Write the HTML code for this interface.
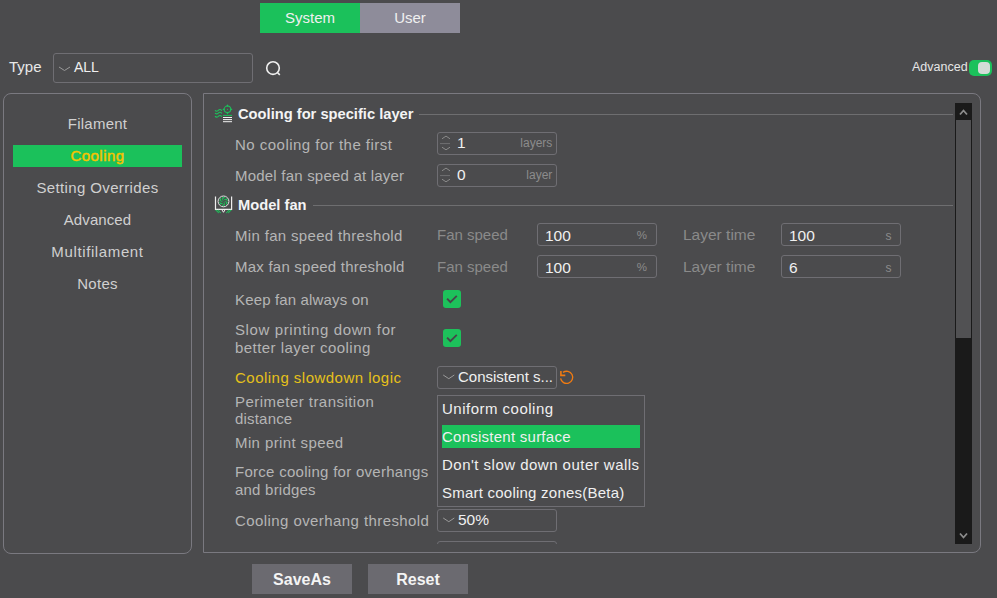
<!DOCTYPE html>
<html><head><meta charset="utf-8">
<style>
html,body{margin:0;padding:0;}
body{width:997px;height:598px;background:#4b4b4d;position:relative;overflow:hidden;font-family:"Liberation Sans",sans-serif;color:#b9b9b9;}
.a{position:absolute;white-space:nowrap;}
.t{position:absolute;white-space:nowrap;font-size:15px;letter-spacing:0.35px;line-height:20px;}
.tab{position:absolute;top:3px;height:30px;width:100px;text-align:center;line-height:30px;font-size:15px;color:#f0f0f0;}
.box{position:absolute;border:1px solid #6f6e73;border-radius:3px;box-sizing:border-box;}
.val{position:absolute;font-size:15.5px;color:#f0f0f0;line-height:20px;}
.unit{position:absolute;font-size:12px;color:#8c8c8c;line-height:16px;}
.lbl{font-size:15px;letter-spacing:0.35px;color:#b5b5b5;}
.side{position:absolute;left:13px;width:169px;text-align:center;font-size:15px;line-height:20px;color:#d0d0d0;margin-top:0px;}
.hdr{position:absolute;font-weight:bold;font-size:14.7px;color:#f4f4f4;line-height:20px;}
.hline{position:absolute;height:1px;background:#6e6e70;}
.chk{position:absolute;width:18px;height:18px;background:#1dc15b;border-radius:3px;}
.btn{position:absolute;top:564px;height:30px;width:100px;background:#6b6a70;color:#f4f4f4;font-weight:bold;font-size:16px;text-align:center;line-height:31px;}
</style></head><body>
<!-- tabs -->
<div class="tab" style="left:260px;background:#1bc15b;">System</div>
<div class="tab" style="left:360px;background:#8e8c9a;">User</div>

<!-- type row -->
<div class="t" style="left:9px;top:57px;color:#e8e8e8;font-size:15px;letter-spacing:0;">Type</div>
<div class="box" style="left:53px;top:53px;width:200px;height:30px;"></div>
<svg class="a" style="left:58px;top:65.5px" width="13" height="6" viewBox="0 0 13 6"><path d="M1 1 L6.5 4.5 L12 1" stroke="#9a9a9a" stroke-width="1" fill="none"/></svg>
<div class="t" style="left:74px;top:57px;color:#f0f0f0;font-size:14px;letter-spacing:-0.1px;">ALL</div>
<svg class="a" style="left:264px;top:59px" width="20" height="18" viewBox="0 0 20 18"><circle cx="9" cy="9.1" r="6.3" stroke="#f0f0f0" stroke-width="1.6" fill="none"/><path d="M13.6 13.7 L15.8 15.9" stroke="#f0f0f0" stroke-width="1.6"/></svg>

<!-- advanced toggle -->
<div class="t" style="left:912px;top:57px;font-size:12.5px;letter-spacing:0;color:#e6e6e6;">Advanced</div>
<div class="a" style="left:969px;top:60px;width:23px;height:16px;background:#1bc15b;border-radius:5px;"></div>
<div class="a" style="left:978px;top:62px;width:12px;height:12px;background:#d3ddd7;border-radius:4px;"></div>

<!-- left panel -->
<div class="box" style="left:3px;top:93px;width:189px;height:461px;border-radius:8px;border-color:#7a7980;"></div>
<div class="side" style="top:114px;letter-spacing:0.24px;">Filament</div>
<div class="a" style="left:13px;top:145px;width:169px;height:22px;background:#1bc15b;"></div>
<div class="side" style="top:146px;color:#f6c300;-webkit-text-stroke:0.45px #f6c300;letter-spacing:0.45px;">Cooling</div>
<div class="side" style="top:178px;letter-spacing:0.37px;">Setting Overrides</div>
<div class="side" style="top:210px;letter-spacing:0.10px;">Advanced</div>
<div class="side" style="top:242px;letter-spacing:0.62px;">Multifilament</div>
<div class="side" style="top:274px;letter-spacing:0.30px;">Notes</div>

<!-- right panel -->
<div class="a" style="left:203px;top:93px;width:778px;height:460px;border:1px solid #7a7980;border-radius:0 8px 8px 0;box-sizing:border-box;"></div>

<!-- scrollbar -->
<div class="a" style="left:955px;top:103px;width:17px;height:441px;background:#1a1a1a;"></div>
<div class="a" style="left:956px;top:120px;width:15px;height:218px;background:#515153;"></div>
<svg class="a" style="left:957px;top:107px" width="13" height="10" viewBox="0 0 13 10"><path d="M3 7.5 L6.5 3.5 L10 7.5" stroke="#8c8c8c" stroke-width="1.8" fill="none"/></svg>
<svg class="a" style="left:957px;top:531px" width="13" height="10" viewBox="0 0 13 10"><path d="M3 2.5 L6.5 6.5 L10 2.5" stroke="#8c8c8c" stroke-width="1.8" fill="none"/></svg>


<!-- section 1 header -->
<svg class="a" style="left:212px;top:102px" width="24" height="24" viewBox="0 0 24 24">
<g stroke="#1dc15b" stroke-width="1.1" fill="none" stroke-linecap="round">
<path d="M3.3 8.6 C4.3 9.6 5.2 9.4 6.3 8.4 C7.3 7.4 8.4 7.1 9.6 8.4"/>
<path d="M3.3 11.3 C4.3 12.3 5.2 12.1 6.3 11.1 C7.3 10.1 8.4 9.8 9.6 11.1"/>
<path d="M3.3 14.5 C4.3 15.5 5.2 15.3 6.3 14.3 C7.3 13.3 8.4 13 9.6 14.3"/>
<circle cx="15.45" cy="7.35" r="3.3" stroke-width="1.05"/>
<path d="M15.45 2.25 L16.40 3.65 L15.45 5.05 L14.50 3.65 Z M15.45 9.65 L16.40 11.05 L15.45 12.45 L14.50 11.05 Z M11.75 6.40 L13.15 7.35 L11.75 8.30 L10.35 7.35 Z M19.15 6.40 L20.55 7.35 L19.15 8.30 L17.75 7.35 Z" fill="#1dc15b" stroke="none"/>
<path d="M10.9 13.4 H20.1" stroke-width="1.05" stroke-linecap="butt"/>
</g>
<circle cx="15.45" cy="7.35" r="0.55" fill="#1dc15b"/>
<g stroke="#f2f2f2" stroke-width="1" fill="none">
<path d="M11 15.5 H20 M11 17.6 H20 M11 19.7 H20"/>
</g>
</svg>
<div class="hdr" style="left:238px;top:103.5px;">Cooling for specific layer</div>
<div class="hline" style="left:419px;top:114px;width:534px;"></div>

<div class="t lbl" style="left:235px;top:135.1px;letter-spacing:0.48px;">No cooling for the first</div>
<div class="box" style="left:437px;top:132px;width:120px;height:23px;"></div>
<svg class="a" style="left:435px;top:130px" width="20" height="28" viewBox="0 0 20 28"><path d="M7 8.8 L11 6.1 L15 8.8" stroke="#8a8a8a" stroke-width="1" fill="none"/><path d="M5 13.6 H15" stroke="#707072" stroke-width="1"/><path d="M7 17.2 L11 19.8 L15 17.2" stroke="#8a8a8a" stroke-width="1" fill="none"/></svg>
<div class="val" style="left:457px;top:133px;">1</div>
<div class="unit" style="right:444.7px;top:135px;">layers</div>

<div class="t lbl" style="left:235px;top:166.1px;letter-spacing:0.21px;">Model fan speed at layer</div>
<div class="box" style="left:437px;top:164px;width:120px;height:23px;"></div>
<svg class="a" style="left:435px;top:162px" width="20" height="28" viewBox="0 0 20 28"><path d="M7 8.8 L11 6.1 L15 8.8" stroke="#8a8a8a" stroke-width="1" fill="none"/><path d="M5 13.6 H15" stroke="#707072" stroke-width="1"/><path d="M7 17.2 L11 19.8 L15 17.2" stroke="#8a8a8a" stroke-width="1" fill="none"/></svg>
<div class="val" style="left:457px;top:165px;">0</div>
<div class="unit" style="right:444.7px;top:167px;">layer</div>

<!-- section 2 header -->
<svg class="a" style="left:212px;top:193px" width="24" height="24" viewBox="0 0 24 24">
<path d="M3.5 3.5 V16.3 H19.6 V3.5" stroke="#eeeeee" stroke-width="1.2" fill="none"/>
<circle cx="11.5" cy="8.4" r="5.4" stroke="#e4e4e4" stroke-width="1" fill="#4b4b4d"/><circle cx="11.5" cy="8.4" r="4.3" fill="#1dc15b"/>
<g stroke="#4b4b4d" stroke-width="1.05" fill="none"><path d="M12.37 8.63 Q14.20 9.12 13.07 12.72"/><path d="M11.73 9.27 Q12.22 11.10 8.54 11.92"/><path d="M10.86 9.04 Q9.52 10.38 6.97 7.60"/><path d="M10.63 8.17 Q8.80 7.68 9.93 4.08"/><path d="M11.27 7.53 Q10.78 5.70 14.46 4.88"/><path d="M12.14 7.76 Q13.48 6.42 16.03 9.20"/></g>
<circle cx="11.5" cy="8.4" r="0.9" fill="#4b4b4d"/>
<path d="M9.6 16.3 L11.5 19.3 L13.3 16.3" stroke="#eeeeee" stroke-width="1" fill="none"/>
<g fill="#1dc15b">
<circle cx="4.3" cy="17.4" r="0.7"/><circle cx="6.3" cy="17.4" r="0.7"/><circle cx="5.3" cy="18.5" r="0.7"/><circle cx="7.3" cy="18.5" r="0.7"/><circle cx="6.3" cy="19.6" r="0.7"/><circle cx="8.3" cy="19.6" r="0.7"/>
<circle cx="18.7" cy="17.4" r="0.7"/><circle cx="16.7" cy="17.4" r="0.7"/><circle cx="17.7" cy="18.5" r="0.7"/><circle cx="15.7" cy="18.5" r="0.7"/><circle cx="16.7" cy="19.6" r="0.7"/><circle cx="14.7" cy="19.6" r="0.7"/>
</g>
</svg>
<div class="hdr" style="left:238px;top:195px;">Model fan</div>
<div class="hline" style="left:313px;top:205px;width:640px;"></div>

<div class="t lbl" style="left:235px;top:225.8px;letter-spacing:0.33px;">Min fan speed threshold</div>
<div class="t" style="left:437px;top:225.2px;color:#8a8a8a;font-size:15px;letter-spacing:0;">Fan speed</div>
<div class="box" style="left:537px;top:223px;width:120px;height:23px;"></div>
<div class="val" style="left:545px;top:225.6px;">100</div>
<div class="unit" style="right:350px;top:226.5px;font-size:11.5px;">%</div>
<div class="t" style="left:683px;top:225.2px;color:#8a8a8a;font-size:15.5px;letter-spacing:0;">Layer time</div>
<div class="box" style="left:781px;top:223px;width:120px;height:23px;"></div>
<div class="val" style="left:789px;top:225.6px;">100</div>
<div class="unit" style="right:105.5px;top:227.5px;">s</div>

<div class="t lbl" style="left:235px;top:256.8px;letter-spacing:0.23px;">Max fan speed threshold</div>
<div class="t" style="left:437px;top:256.5px;color:#8a8a8a;font-size:15px;letter-spacing:0;">Fan speed</div>
<div class="box" style="left:537px;top:255px;width:120px;height:23px;"></div>
<div class="val" style="left:545px;top:257.6px;">100</div>
<div class="unit" style="right:350px;top:258.5px;font-size:11.5px;">%</div>
<div class="t" style="left:683px;top:256.5px;color:#8a8a8a;font-size:15.5px;letter-spacing:0;">Layer time</div>
<div class="box" style="left:781px;top:255px;width:120px;height:23px;"></div>
<div class="val" style="left:789px;top:257.6px;">6</div>
<div class="unit" style="right:105.5px;top:259.5px;">s</div>

<div class="t lbl" style="left:235px;top:290px;letter-spacing:0.15px;">Keep fan always on</div>
<div class="chk" style="left:443px;top:290px;"><svg width="18" height="18" viewBox="0 0 18 18"><path d="M4.1 8.7 L7.4 12.2 L13.8 5.9" stroke="#464649" stroke-width="1.9" fill="none"/></svg></div>

<div class="t lbl" style="left:235px;top:319.9px;letter-spacing:0.62px;">Slow printing down for</div>
<div class="t lbl" style="left:235px;top:337.5px;letter-spacing:0.45px;">better layer cooling</div>
<div class="chk" style="left:443px;top:329px;"><svg width="18" height="18" viewBox="0 0 18 18"><path d="M4.1 8.7 L7.4 12.2 L13.8 5.9" stroke="#464649" stroke-width="1.9" fill="none"/></svg></div>

<div class="t" style="left:235px;top:368.2px;color:#e6c11a;letter-spacing:0.48px;">Cooling slowdown logic</div>
<div class="box" style="left:437px;top:366px;width:120px;height:23px;"></div>
<svg class="a" style="left:442px;top:374px" width="14" height="6" viewBox="0 0 14 6"><path d="M1.2 1 L6.8 4.7 L12.3 1" stroke="#9a9a9a" stroke-width="1" fill="none"/></svg>
<div class="val" style="left:458px;top:366.5px;font-size:15px;letter-spacing:0px;">Consistent s...</div>
<svg class="a" style="left:554px;top:364px" width="26" height="28" viewBox="0 0 26 28"><path d="M6.6 14.4 A6.1 6.1 0 1 0 9 8.4" stroke="#f07b12" stroke-width="1.35" fill="none"/><path d="M6.9 7 V11.4 H11.3" stroke="#f07b12" stroke-width="1.6" fill="none"/></svg>

<div class="t lbl" style="left:235px;top:391.8px;letter-spacing:0.46px;">Perimeter transition</div>
<div class="t lbl" style="left:235px;top:408.9px;letter-spacing:0.19px;">distance</div>
<div class="t lbl" style="left:235px;top:432.8px;letter-spacing:0.39px;">Min print speed</div>
<div class="t lbl" style="left:235px;top:462.1px;letter-spacing:0.28px;">Force cooling for overhangs</div>
<div class="t lbl" style="left:235px;top:479.5px;letter-spacing:0.22px;">and bridges</div>

<div class="t lbl" style="left:235px;top:511.3px;letter-spacing:0.42px;">Cooling overhang threshold</div>
<div class="box" style="left:437px;top:509px;width:120px;height:23px;"></div>
<svg class="a" style="left:442px;top:517px" width="14" height="6" viewBox="0 0 14 6"><path d="M1.2 1 L6.8 4.7 L12.3 1" stroke="#9a9a9a" stroke-width="1" fill="none"/></svg>
<div class="val" style="left:458px;top:510px;">50%</div>
<div class="a" style="left:437px;top:541px;width:120px;height:3px;overflow:hidden;"><div class="box" style="left:0;top:0;width:120px;height:23px;"></div></div>

<!-- dropdown -->
<div class="a" style="left:437px;top:395px;width:208px;height:112px;background:#4b4b4d;border:1px solid #6f6e73;box-sizing:border-box;"></div>
<div class="a" style="left:442px;top:425px;width:198px;height:23px;background:#1bc15b;"></div>
<div class="t" style="left:442px;top:399px;color:#f0f0f0;letter-spacing:0.49px;">Uniform cooling</div>
<div class="t" style="left:442px;top:426.6px;color:#f0f0f0;letter-spacing:0.25px;">Consistent surface</div>
<div class="t" style="left:442px;top:454.7px;color:#f0f0f0;letter-spacing:0.48px;">Don't slow down outer walls</div>
<div class="t" style="left:442px;top:482.5px;color:#f0f0f0;letter-spacing:0.23px;">Smart cooling zones(Beta)</div>


<!-- buttons -->
<div class="btn" style="left:252px;">SaveAs</div>
<div class="btn" style="left:368px;">Reset</div>
</body></html>
